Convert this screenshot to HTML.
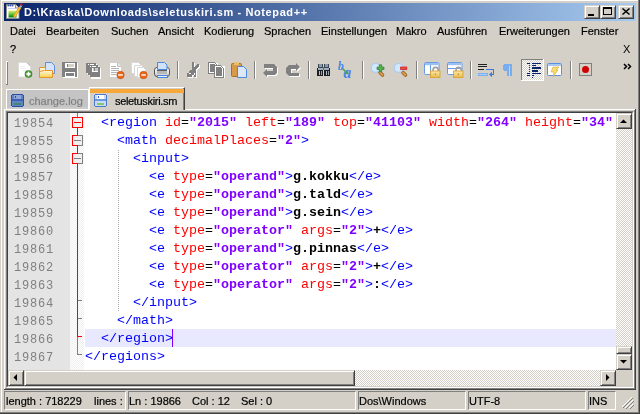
<!DOCTYPE html>
<html><head><meta charset="utf-8">
<style>
*{margin:0;padding:0;box-sizing:border-box}
html,body{width:640px;height:414px;overflow:hidden;background:#D4D0C8}
body{position:relative;font-family:"Liberation Sans",sans-serif;font-size:11px;color:#000;will-change:transform}
.a{position:absolute}
.t{position:absolute;white-space:nowrap;line-height:1;-webkit-text-stroke:0.2px currentColor}
.mono{font-family:"Liberation Mono",monospace;font-size:13.33px;line-height:18px;white-space:pre;margin-top:1px}
.ln{font-family:"Liberation Mono",monospace;font-size:12px;letter-spacing:0.8px;line-height:18px;white-space:pre;margin-top:1.5px;color:#808080}
.chk{background:repeating-conic-gradient(#FFFFFF 0 25%,#D4D0C8 0 50%) 0 0/2px 2px}
.btn{position:absolute;background:#D4D0C8;border-top:1px solid #D4D0C8;border-left:1px solid #D4D0C8;border-right:1px solid #404040;border-bottom:1px solid #404040;box-shadow:inset 1px 1px 0 #FFF,inset -1px -1px 0 #808080}
.tg{color:#0000FF}.at{color:#FF0000}.vl{color:#8000FF;font-weight:bold}.tx{font-weight:bold}
</style></head><body>
<!-- window frame -->
<div class="a" style="left:1px;top:0;width:1px;height:413px;background:#FFF"></div>
<div class="a" style="left:1px;top:0;width:637px;height:1px;background:#FFF"></div>
<div class="a" style="left:638px;top:0;width:1px;height:414px;background:#808080"></div>
<div class="a" style="left:639px;top:0;width:1px;height:414px;background:#404040"></div>
<div class="a" style="left:0;top:412px;width:639px;height:1px;background:#808080"></div>
<div class="a" style="left:0;top:413px;width:640px;height:1px;background:#404040"></div>

<!-- title bar -->
<div class="a" style="left:4px;top:3px;width:632px;height:18px;background:linear-gradient(to right,#0A246A,#A6CAF0)"></div>
<svg class="a" style="left:4px;top:2px" width="20" height="20" viewBox="0 0 20 20">
<defs><linearGradient id="gg" x1="0" y1="0" x2="0" y2="1"><stop offset="0" stop-color="#E8F080"/><stop offset="0.55" stop-color="#58C030"/><stop offset="1" stop-color="#087010"/></linearGradient>
<linearGradient id="pc" x1="0" y1="0" x2="1" y2="0"><stop offset="0" stop-color="#F8D040"/><stop offset="1" stop-color="#E09010"/></linearGradient></defs>
<path d="M2.5 2.5h9l3.5 3.5v10.5h-12.5z" fill="#FFFFFF" stroke="#8C8C8C"/>
<path d="M11.5 2.5v3.5h3.5" fill="#F0F0F0" stroke="#8C8C8C"/>
<rect x="4.5" y="8.5" width="8" height="7" fill="url(#gg)"/>
<rect x="4" y="6" width="8" height="0.8" fill="#B8C8E8"/>
<circle cx="4.3" cy="3.6" r="1" fill="#3858B0"/><circle cx="6.4" cy="3.6" r="1" fill="#3858B0"/><circle cx="8.5" cy="3.6" r="1" fill="#3858B0"/>
<path d="M10.2 14.8 L16.2 5.2" stroke="#E8A018" stroke-width="2.6"/>
<path d="M10.2 14.8 L16.2 5.2" stroke="#F8D848" stroke-width="1"/>
<path d="M16.2 5.2 L17.4 3.4" stroke="#A0B8D0" stroke-width="2"/>
<circle cx="17.3" cy="2.6" r="1.2" fill="#D01818"/>
</svg>
<div class="t" style="left:24px;top:7px;font-size:11px;font-weight:bold;color:#fff;letter-spacing:0.6px;-webkit-text-stroke:0">D:\Kraska\Downloads\seletuskiri.sm - Notepad++</div>
<div class="btn" style="left:584px;top:5px;width:16px;height:14px"></div>
<div class="a" style="left:588px;top:14px;width:6px;height:2px;background:#000"></div>
<div class="btn" style="left:600px;top:5px;width:16px;height:14px"></div>
<div class="a" style="left:603px;top:7px;width:9px;height:8px;border:1px solid #000;border-top-width:2px"></div>
<div class="btn" style="left:618px;top:5px;width:16px;height:14px"></div>
<svg class="a" style="left:618px;top:5px" width="16" height="14" viewBox="0 0 16 14"><path d="M4.5 3.5 L11.5 9.5 M11.5 3.5 L4.5 9.5" stroke="#000" stroke-width="1.6"/></svg>

<!-- menu -->
<div class="t" style="left:10px;top:26px">Datei</div>
<div class="t" style="left:46px;top:26px">Bearbeiten</div>
<div class="t" style="left:111px;top:26px">Suchen</div>
<div class="t" style="left:158px;top:26px">Ansicht</div>
<div class="t" style="left:204px;top:26px">Kodierung</div>
<div class="t" style="left:264px;top:26px">Sprachen</div>
<div class="t" style="left:321px;top:26px">Einstellungen</div>
<div class="t" style="left:396px;top:26px">Makro</div>
<div class="t" style="left:437px;top:26px">Ausführen</div>
<div class="t" style="left:499px;top:26px">Erweiterungen</div>
<div class="t" style="left:581px;top:26px">Fenster</div>
<div class="t" style="left:10px;top:44px">?</div>
<div class="t" style="left:623px;top:44px;font-size:11px;-webkit-text-stroke:0">X</div>

<!-- toolbar -->
<svg class="a" style="left:0;top:56px" width="640" height="30" viewBox="0 56 640 30">
<defs>
<pattern id="ck" width="2" height="2" patternUnits="userSpaceOnUse"><rect width="2" height="2" fill="#D4D0C8"/><rect width="1" height="1" fill="#fff"/><rect x="1" y="1" width="1" height="1" fill="#fff"/></pattern>
<linearGradient id="fold" x1="0" y1="0" x2="0" y2="1"><stop offset="0" stop-color="#FFF8E0"/><stop offset="1" stop-color="#F6D048"/></linearGradient>
<linearGradient id="lock" x1="0" y1="0" x2="0" y2="1"><stop offset="0" stop-color="#FCEAA8"/><stop offset="1" stop-color="#E8B848"/></linearGradient>
</defs>
<g shape-rendering="crispEdges">
<!-- gripper -->
<rect x="6" y="61" width="2" height="24" fill="#FFFFFF"/>
<rect x="7" y="62" width="1" height="23" fill="#808080"/><rect x="6" y="84" width="2" height="1" fill="#808080"/>
<!-- separators -->
<rect x="177" y="61" width="1" height="18" fill="#808080"/><rect x="178" y="61" width="1" height="18" fill="#FFFFFF"/>
<rect x="254" y="61" width="1" height="18" fill="#808080"/><rect x="255" y="61" width="1" height="18" fill="#FFFFFF"/>
<rect x="308" y="61" width="1" height="18" fill="#808080"/><rect x="309" y="61" width="1" height="18" fill="#FFFFFF"/>
<rect x="362" y="61" width="1" height="18" fill="#808080"/><rect x="363" y="61" width="1" height="18" fill="#FFFFFF"/>
<rect x="416" y="61" width="1" height="18" fill="#808080"/><rect x="417" y="61" width="1" height="18" fill="#FFFFFF"/>
<rect x="470" y="61" width="1" height="18" fill="#808080"/><rect x="471" y="61" width="1" height="18" fill="#FFFFFF"/>
<rect x="570" y="61" width="1" height="18" fill="#808080"/><rect x="571" y="61" width="1" height="18" fill="#FFFFFF"/>
</g>
<!-- new -->
<radialGradient id="gr" cx="0.5" cy="0.5" r="0.5"><stop offset="0" stop-color="#B8E8A0"/><stop offset="0.6" stop-color="#58A840"/><stop offset="1" stop-color="#2C7820"/></radialGradient>
<path d="M18.5 62.5h8.5l3.5 3.5v11h-12z" fill="#FFFFFF" stroke="#DCDCDC"/>
<path d="M27 62.5l3.5 3.5" stroke="#B0B0B0"/>
<path d="M20 66.5h5M20 68.5h6M23 70.5h4" stroke="#F0F0F0"/>
<circle cx="28.5" cy="74" r="3.8" fill="url(#gr)"/>
<path d="M28.5 71.8v4.4M26.3 74h4.4" stroke="#fff" stroke-width="1.3"/>
<!-- open -->
<path d="M45.5 62.5h6l3 3v8h-9z" fill="#D4E4FA" stroke="#5C8FE0"/>
<path d="M39.5 77.5V67.5H45.5V72" fill="#FFF4D0" stroke="#E8942C"/>
<rect x="40" y="68" width="5" height="9" fill="#FFF4D0"/>
<path d="M39.5 71.5L44.5 70.5H52.5V77.5H39.5Z" fill="url(#fold)" stroke="#E8942C"/>
<!-- save (disabled) -->
<g shape-rendering="crispEdges">
<rect x="63" y="63" width="15" height="15" fill="#FFFFFF"/>
<rect x="62" y="62" width="15" height="15" fill="#808080"/>
<rect x="65" y="63" width="10" height="5" fill="#FFFFFF"/><rect x="67" y="64" width="7" height="3" fill="#D4D0C8"/><rect x="67" y="64" width="1" height="3" fill="#808080"/>
<rect x="65" y="72" width="10" height="5" fill="#FFFFFF"/><rect x="66" y="73" width="8" height="3" fill="#808080"/>
<!-- save all -->
<path d="M87 64h9l1 1v9h-10z" fill="#FFFFFF"/><path d="M89 66h9l1 1v9h-10z" fill="#FFFFFF"/><path d="M91 68h9l1 1v10h-10z" fill="#FFFFFF"/>
<path d="M86 63h9l1 1v9h-10z" fill="#808080"/><path d="M88 65h9l1 1v9h-10z" fill="#808080"/><path d="M90 67h9l1 1v9h-10z" fill="#808080"/>
<rect x="88" y="64" width="1" height="1" fill="#fff"/><rect x="90" y="64" width="4" height="1" fill="#fff"/>
<rect x="90" y="66" width="1" height="1" fill="#fff"/><rect x="92" y="66" width="4" height="1" fill="#fff"/>
<rect x="92" y="68" width="1" height="4" fill="#fff"/><rect x="92" y="71" width="6" height="1" fill="#fff"/><rect x="93" y="68" width="5" height="3" fill="#C8C8C8"/><rect x="94" y="68" width="1" height="3" fill="#808080"/>
</g>
<!-- close -->
<path d="M109.5 62.5h8l4 4v11h-12z" fill="#FFFFFF" stroke="#D0D0D0"/><path d="M117.5 62.5v4h4" fill="#E8E8E8" stroke="#C0C0C0"/>
<path d="M111 66.5h5M111 68.5h8M111 70.5h8M111 72.5h6M111 74.5h5" stroke="#B4B4B4" stroke-width="1"/>
<circle cx="120.5" cy="75" r="3.7" fill="#E86818" stroke="#C04808" stroke-width="0.6"/>
<rect x="118.2" y="74.3" width="4.6" height="1.4" fill="#fff"/>
<!-- close all -->
<path d="M131.5 62.5h7l2 2v9h-9z" fill="#FFFFFF" stroke="#D8D8D8"/>
<path d="M134.5 65.5h7l2 2v9h-9z" fill="#FFFFFF" stroke="#D8D8D8"/>
<path d="M137.5 67.5h6l2 2v8h-8z" fill="#FFFFFF" stroke="#D8D8D8"/>
<circle cx="143.5" cy="75" r="3.7" fill="#E86818" stroke="#C04808" stroke-width="0.6"/>
<rect x="141.2" y="74.3" width="4.6" height="1.4" fill="#fff"/>
<!-- print -->
<linearGradient id="prg" x1="0" y1="0" x2="0" y2="1"><stop offset="0" stop-color="#FFFFFF"/><stop offset="1" stop-color="#C8C8C8"/></linearGradient>
<rect x="154.5" y="67.5" width="15" height="9" rx="2.5" fill="url(#prg)" stroke="#585858"/>
<rect x="157" y="71" width="10" height="3" fill="#B8B8B8"/>
<rect x="157" y="70" width="10" height="1" fill="#606060"/>
<path d="M157.5 62.5h7l2.5 2.5v4.5h-9.5z" fill="#CFE2FA" stroke="#4A88E0"/>
<rect x="157.5" y="75.5" width="10" height="2" fill="#E8F0FC" stroke="#4A88E0"/>
<!-- cut (disabled) -->
<g shape-rendering="crispEdges">
<g transform="translate(1,1)" fill="#FFFFFF">
<rect x="192" y="62" width="2" height="9"/>
<path d="M197 64h2v2l-4 5h-2v-2z"/>
<path d="M190 70h6v7h-2v-2h-2v2h-5v-4h2z"/>
</g>
<g fill="#808080">
<rect x="192" y="62" width="2" height="9"/>
<path d="M197 64h2v2l-4 5h-2v-2z"/>
<path d="M190 70h6v7h-2v-2h-2v2h-5v-4h2z"/>
</g>
<rect x="189" y="73" width="2" height="1" fill="#FFFFFF"/><rect x="194" y="73" width="1" height="2" fill="#FFFFFF"/>
<!-- copy (disabled) -->
<rect x="209" y="63" width="9" height="11" fill="#FFFFFF"/>
<path d="M208.5 62.5h6l2 2v9h-8z" fill="#FFFFFF" stroke="#808080"/>
<rect x="210" y="64" width="5" height="8" fill="#808080"/>
<rect x="215" y="66" width="10" height="12" fill="#FFFFFF"/>
<path d="M214.5 65.5h6l3 3v8.5h-9z" fill="#FFFFFF" stroke="#808080"/>
<path d="M216 67h4l2 2v7h-6z" fill="#808080"/>
</g>
<!-- paste -->
<rect x="231.5" y="63.5" width="10" height="13" rx="1" fill="#D89A48" stroke="#A8702C"/>
<rect x="234" y="62" width="5" height="3" fill="#E8C070"/>
<path d="M237.5 66.5h6l3 3v8h-9z" fill="#DCE8FA" stroke="#4C88DC"/>
<!-- undo (disabled) -->
<path d="M264 64H274L277 67V73L275 75H267V77L263 73L267 69V71H273V68H264Z" fill="#FFFFFF" transform="translate(1,1)"/>
<path d="M264 64H274L277 67V73L275 75H267V77L263 73L267 69V71H273V68H264Z" fill="#808080"/>
<!-- redo -->
<path d="M289 65H296V63L300 67L296 71V69H291V73H299V76H289L286 73V68Z" fill="#FFFFFF" transform="translate(1,1)"/>
<path d="M289 65H296V63L300 67L296 71V69H291V73H299V76H289L286 73V68Z" fill="#808080"/>
<!-- find -->
<g shape-rendering="crispEdges">
<rect x="318" y="64" width="5" height="4" fill="#404850"/><rect x="324" y="64" width="5" height="4" fill="#404850"/>
<rect x="319" y="64" width="3" height="3" fill="#8898B0"/><rect x="325" y="64" width="3" height="3" fill="#8898B0"/>
<rect x="317" y="68" width="6" height="8" fill="#1C2024"/><rect x="324" y="68" width="6" height="8" fill="#1C2024"/>
<rect x="318" y="68" width="11" height="2" fill="#A0B0C0"/>
<rect x="323" y="67" width="1" height="3" fill="#606870"/>
<rect x="319" y="71" width="1" height="4" fill="#B8C0C8"/><rect x="321" y="71" width="1" height="4" fill="#98A0A8"/>
<rect x="326" y="71" width="1" height="4" fill="#B8C0C8"/><rect x="328" y="71" width="1" height="4" fill="#98A0A8"/>
</g>
<!-- replace -->
<path d="M341.5 67.5l4.5 4.5" stroke="#40A848" stroke-width="1.6"/><path d="M348.5 74.5l-5-1 4-4z" fill="#40A848"/>
<text x="338" y="70" font-family="Liberation Serif" font-style="italic" font-weight="bold" font-size="12" fill="#4A88E8">b</text>
<text x="343.5" y="78" font-family="Liberation Serif" font-style="italic" font-weight="bold" font-size="16" fill="#4A88E8">a</text>
<!-- zoom in -->
<path d="M380 72.5l2.5 2.5" stroke="#9A6020" stroke-width="3.6" stroke-linecap="round"/>
<path d="M380 72.5l2.5 2.5" stroke="#D89850" stroke-width="2" stroke-linecap="round"/>
<circle cx="375.6" cy="67.9" r="4.4" fill="#D4E8FC" stroke="#A8CCF0" stroke-width="1.2"/>
<path d="M379.3 64.8h2.4v2.3h2.3v2.4h-2.3v2.3h-2.4v-2.3h-2.3v-2.4h2.3z" fill="#58B050" stroke="#2E8030" stroke-width="0.7"/>
<!-- zoom out -->
<path d="M403 72.5l2.5 2.5" stroke="#9A6020" stroke-width="3.6" stroke-linecap="round"/>
<path d="M403 72.5l2.5 2.5" stroke="#D89850" stroke-width="2" stroke-linecap="round"/>
<circle cx="398.6" cy="67.9" r="4.4" fill="#D4E8FC" stroke="#A8CCF0" stroke-width="1.2"/>
<rect x="400.6" y="67" width="6.2" height="2.6" fill="#F04848" stroke="#C82020" stroke-width="0.7"/>
<!-- sync v -->
<rect x="424.5" y="62.5" width="14.5" height="12" rx="1.2" fill="#fff" stroke="#6A9AE6"/>
<rect x="425" y="63" width="13.5" height="2.2" fill="#9CC0F0"/>
<rect x="430" y="65" width="1" height="9" fill="#6A9AE6"/>
<path d="M433 72v-2a2.6 2.6 0 0 1 5.2 0v2" fill="none" stroke="#A0A0A0" stroke-width="1.6"/>
<rect x="430.5" y="71" width="9.5" height="6.5" fill="url(#lock)" stroke="#D8A438" stroke-width="0.9"/>
<rect x="434.8" y="73.5" width="1.2" height="1.5" fill="#C89030"/>
<!-- sync h -->
<rect x="447.5" y="62.5" width="14.5" height="12" rx="1.2" fill="#fff" stroke="#6A9AE6"/>
<rect x="448" y="63" width="13.5" height="2.2" fill="#9CC0F0"/>
<rect x="448" y="68" width="13.5" height="1" fill="#6A9AE6"/>
<path d="M456 72v-2a2.6 2.6 0 0 1 5.2 0v2" fill="none" stroke="#A0A0A0" stroke-width="1.6"/>
<rect x="453.5" y="71" width="9.5" height="6.5" fill="url(#lock)" stroke="#D8A438" stroke-width="0.9"/>
<rect x="457.8" y="73.5" width="1.2" height="1.5" fill="#C89030"/>
<!-- wrap -->
<g shape-rendering="crispEdges">
<rect x="478" y="64" width="9" height="1" fill="#202020"/>
<rect x="478" y="66" width="9" height="1" fill="#202020"/>
<rect x="478" y="69" width="6" height="1" fill="#202020"/>
<rect x="478" y="73" width="10" height="3" fill="#7CB0EE"/>
<rect x="479" y="74" width="8" height="1" fill="#A8CCF6"/>
<rect x="486" y="69" width="8" height="1" fill="#3C7CD8"/>
<rect x="493" y="69" width="1" height="6" fill="#3C7CD8"/>
<rect x="491" y="74" width="3" height="1" fill="#3C7CD8"/>
</g>
<path d="M489 74.5L492 71.8V77.2Z" fill="#3C7CD8"/>
<!-- pilcrow -->
<g shape-rendering="crispEdges" fill="#78AEF0">
<path d="M506 64h6v12h-2v-10h-1v10h-2v-5h-1a2.5 3 0 0 1 0-7z"/>
</g>
<!-- indent guide (checked) -->
<g shape-rendering="crispEdges">
<rect x="521" y="59" width="23" height="22" fill="url(#ck)"/>
<rect x="521" y="59" width="23" height="1" fill="#808080"/>
<rect x="521" y="59" width="1" height="22" fill="#808080"/>
<rect x="521" y="80" width="23" height="1" fill="#FFFFFF"/>
<rect x="543" y="59" width="1" height="22" fill="#FFFFFF"/>
<g fill="#0A246A">
<rect x="527" y="63" width="3" height="1"/><rect x="532" y="63" width="9" height="1"/>
<rect x="532" y="65" width="4" height="1"/>
<rect x="532" y="67" width="9" height="2"/>
<rect x="532" y="70" width="6" height="2"/>
<rect x="527" y="73" width="3" height="1"/><rect x="532" y="73" width="9" height="1"/>
<rect x="527" y="75" width="3" height="1"/><rect x="532" y="75" width="2" height="1"/>
<rect x="532" y="77" width="1" height="1"/>
</g>
<g fill="#E00000"><rect x="529" y="65" width="1" height="1"/><rect x="529" y="67" width="1" height="1"/><rect x="529" y="69" width="1" height="1"/><rect x="529" y="71" width="1" height="1"/></g>
</g>
<!-- UDL -->
<rect x="547.5" y="63.5" width="14" height="12" rx="1" fill="#fff" stroke="#5C8FE0"/>
<rect x="548" y="64" width="13" height="2" fill="#A8C8F0"/>
<path d="M553 67h6l-3 3h2l-5 7 1-5h-3z" fill="#F8DC70" stroke="#E0B040" stroke-width="0.7"/>
<!-- record -->
<g shape-rendering="crispEdges">
<rect x="579.5" y="63.5" width="12" height="12" fill="none" stroke="#808080"/>
</g>
<circle cx="585.5" cy="69.5" r="3.5" fill="#D00000"/>
<!-- chevron -->
<path d="M624 64l2.5 2.5-2.5 2.5M628 64l2.5 2.5-2.5 2.5" fill="none" stroke="#000" stroke-width="1.5"/>
</svg>

<!-- tabs -->
<div class="a" style="left:6px;top:89px;width:83px;height:20px;background:#C4C4C4;border:1px solid #FFFFFF;border-bottom:none;border-top-left-radius:1px"></div>
<div class="a" style="left:7px;top:107px;width:81px;height:2px;background:#CCCCCC"></div>
<svg class="a" style="left:11px;top:94px" width="14" height="14" shape-rendering="crispEdges">
<rect x="0" y="1" width="13" height="11" fill="#2A50A4"/><rect x="1" y="0" width="11" height="13" fill="#2A50A4"/>
<rect x="1" y="1" width="11" height="11" fill="#6482C6"/>
<rect x="3" y="1" width="7" height="4" fill="#90A6D8"/><rect x="4" y="2" width="1" height="2" fill="#2A50A4"/>
<rect x="1" y="5" width="11" height="2" fill="#3A60B0"/>
<rect x="3" y="9" width="7" height="2" fill="#3E8A68"/>
</svg>
<div class="t" style="left:29px;top:96px;color:#808080;font-size:11px">change.log</div>
<div class="a" style="left:89px;top:87px;width:96px;height:23px;background:#D4D0C8;border-top:1px solid #FFFFFF;border-left:1px solid #FFFFFF;border-right:1px solid #404040;box-shadow:inset -1px 0 0 #808080"></div>
<div class="a" style="left:90px;top:89px;width:94px;height:4px;background:#F8A838"></div>
<svg class="a" style="left:94px;top:94px" width="14" height="14" shape-rendering="crispEdges">
<rect x="0" y="1" width="13" height="11" fill="#4A78CC"/><rect x="1" y="0" width="11" height="13" fill="#4A78CC"/>
<rect x="1" y="1" width="11" height="11" fill="#C8DAF4"/>
<rect x="3" y="1" width="7" height="4" fill="#FFFFFF"/><rect x="4" y="2" width="1" height="2" fill="#3A68C0"/>
<rect x="1" y="5" width="11" height="2" fill="#6C98DC"/>
<rect x="3" y="9" width="7" height="2" fill="#88C868"/>
</svg>
<div class="t" style="left:115px;top:96px;font-size:11px;letter-spacing:-0.33px">seletuskiri.sm</div>


<!-- tab pane border -->
<div class="a" style="left:4px;top:109px;width:86px;height:1px;background:#FFF"></div><div class="a" style="left:185px;top:109px;width:451px;height:1px;background:#FFF"></div>
<div class="a" style="left:4px;top:109px;width:1px;height:280px;background:#FFF"></div>
<div class="a" style="left:634px;top:110px;width:1px;height:279px;background:#808080"></div>
<div class="a" style="left:635px;top:109px;width:1px;height:281px;background:#404040"></div>
<div class="a" style="left:5px;top:388px;width:630px;height:1px;background:#808080"></div>
<div class="a" style="left:4px;top:389px;width:632px;height:1px;background:#404040"></div>
<!-- editor sunken border -->
<div class="a" style="left:6px;top:111px;width:628px;height:277px;border-top:1px solid #808080;border-left:1px solid #808080;border-right:1px solid #FFF;border-bottom:1px solid #FFF"></div>
<div class="a" style="left:7px;top:112px;width:626px;height:275px;border-top:1px solid #404040;border-left:1px solid #404040;border-right:1px solid #D4D0C8;border-bottom:1px solid #D4D0C8"></div>

<!-- editor content -->
<div class="a" style="left:8px;top:113px;width:608px;height:257px;background:#fff;overflow:hidden">
  <div class="a" style="left:0;top:0;width:62px;height:257px;background:#E4E4E4"></div>
  <div class="a" style="left:62px;top:0;width:14px;height:257px;background:repeating-conic-gradient(#FFFFFF 0 25%,#EFEFEF 0 50%) 0 0/2px 2px"></div>
  <div class="a" style="left:77px;top:216px;width:531px;height:18px;background:#E8E8FF"></div>
  <div class="a mono" style="left:77px;top:0px">  <span class="tg">&lt;region</span> <span class="at">id</span>=<span class="vl">"2015"</span> <span class="at">left</span>=<span class="vl">"189"</span> <span class="at">top</span>=<span class="vl">"41103"</span> <span class="at">width</span>=<span class="vl">"264"</span> <span class="at">height</span>=<span class="vl">"34"</span></div>
<div class="a ln" style="left:0;top:0px;width:46px;text-align:right">19854</div>
<div class="a mono" style="left:77px;top:18px">    <span class="tg">&lt;math</span> <span class="at">decimalPlaces</span>=<span class="vl">"2"</span><span class="tg">&gt;</span></div>
<div class="a ln" style="left:0;top:18px;width:46px;text-align:right">19855</div>
<div class="a mono" style="left:77px;top:36px">      <span class="tg">&lt;input&gt;</span></div>
<div class="a ln" style="left:0;top:36px;width:46px;text-align:right">19856</div>
<div class="a mono" style="left:77px;top:54px">        <span class="tg">&lt;e</span> <span class="at">type</span>=<span class="vl">"operand"</span><span class="tg">&gt;</span><span class="tx">g.kokku</span><span class="tg">&lt;/e&gt;</span></div>
<div class="a ln" style="left:0;top:54px;width:46px;text-align:right">19857</div>
<div class="a mono" style="left:77px;top:72px">        <span class="tg">&lt;e</span> <span class="at">type</span>=<span class="vl">"operand"</span><span class="tg">&gt;</span><span class="tx">g.tald</span><span class="tg">&lt;/e&gt;</span></div>
<div class="a ln" style="left:0;top:72px;width:46px;text-align:right">19858</div>
<div class="a mono" style="left:77px;top:90px">        <span class="tg">&lt;e</span> <span class="at">type</span>=<span class="vl">"operand"</span><span class="tg">&gt;</span><span class="tx">g.sein</span><span class="tg">&lt;/e&gt;</span></div>
<div class="a ln" style="left:0;top:90px;width:46px;text-align:right">19859</div>
<div class="a mono" style="left:77px;top:108px">        <span class="tg">&lt;e</span> <span class="at">type</span>=<span class="vl">"operator"</span> <span class="at">args</span>=<span class="vl">"2"</span><span class="tg">&gt;</span><span class="tx">+</span><span class="tg">&lt;/e&gt;</span></div>
<div class="a ln" style="left:0;top:108px;width:46px;text-align:right">19860</div>
<div class="a mono" style="left:77px;top:126px">        <span class="tg">&lt;e</span> <span class="at">type</span>=<span class="vl">"operand"</span><span class="tg">&gt;</span><span class="tx">g.pinnas</span><span class="tg">&lt;/e&gt;</span></div>
<div class="a ln" style="left:0;top:126px;width:46px;text-align:right">19861</div>
<div class="a mono" style="left:77px;top:144px">        <span class="tg">&lt;e</span> <span class="at">type</span>=<span class="vl">"operator"</span> <span class="at">args</span>=<span class="vl">"2"</span><span class="tg">&gt;</span><span class="tx">+</span><span class="tg">&lt;/e&gt;</span></div>
<div class="a ln" style="left:0;top:144px;width:46px;text-align:right">19862</div>
<div class="a mono" style="left:77px;top:162px">        <span class="tg">&lt;e</span> <span class="at">type</span>=<span class="vl">"operator"</span> <span class="at">args</span>=<span class="vl">"2"</span><span class="tg">&gt;</span><span class="tx">:</span><span class="tg">&lt;/e&gt;</span></div>
<div class="a ln" style="left:0;top:162px;width:46px;text-align:right">19863</div>
<div class="a mono" style="left:77px;top:180px">      <span class="tg">&lt;/input&gt;</span></div>
<div class="a ln" style="left:0;top:180px;width:46px;text-align:right">19864</div>
<div class="a mono" style="left:77px;top:198px">    <span class="tg">&lt;/math&gt;</span></div>
<div class="a ln" style="left:0;top:198px;width:46px;text-align:right">19865</div>
<div class="a mono" style="left:77px;top:216px">  <span class="tg">&lt;/region&gt;</span></div>
<div class="a ln" style="left:0;top:216px;width:46px;text-align:right">19866</div>
<div class="a mono" style="left:77px;top:234px"><span class="tg">&lt;/regions&gt;</span></div>
<div class="a ln" style="left:0;top:234px;width:46px;text-align:right">19867</div>
</div>

<svg class="a" style="left:70px;top:113px" width="14" height="257" shape-rendering="crispEdges">
<rect x="7" y="0" width="1" height="4" fill="#808080"/>
<rect x="2" y="4" width="11" height="11" fill="#F0F0F0"/>
<path d="M2.5 4.5h10v10h-10z" fill="none" stroke="#FF0000"/>
<rect x="4" y="9" width="7" height="1" fill="#FF0000"/>
<rect x="7" y="15" width="1" height="7" fill="#FF0000"/>
<rect x="2" y="22" width="11" height="11" fill="#F0F0F0"/>
<path d="M7.5 22.5h5v10h-5" fill="none" stroke="#808080"/>
<path d="M7.5 22.5h-5v10h5" fill="none" stroke="#FF0000"/>
<rect x="4" y="27" width="7" height="1" fill="#808080"/>
<rect x="7" y="33" width="1" height="7" fill="#FF0000"/>
<rect x="2" y="40" width="11" height="11" fill="#F0F0F0"/>
<path d="M7.5 40.5h5v10h-5" fill="none" stroke="#808080"/>
<path d="M7.5 40.5h-5v10h5" fill="none" stroke="#FF0000"/>
<rect x="4" y="45" width="7" height="1" fill="#808080"/>
<rect x="7" y="51" width="1" height="173" fill="#FF0000"/>
<rect x="8" y="187" width="4" height="1" fill="#808080"/>
<rect x="8" y="205" width="4" height="1" fill="#808080"/>
<rect x="8" y="223" width="4" height="1" fill="#FF0000"/>
<rect x="7" y="224" width="1" height="18" fill="#808080"/>
<rect x="8" y="241" width="4" height="1" fill="#808080"/>
</svg>
<div class="a" style="left:118px;top:150px;width:1px;height:161px;background:repeating-linear-gradient(#A8A8A8 0 1px,transparent 1px 2px)"></div>
<div class="a" style="left:172px;top:329px;width:1px;height:18px;background:#8000FF"></div>
<!-- scrollbars -->
<div class="a chk" style="left:616px;top:113px;width:16px;height:257px"></div>
<div class="btn" style="left:616px;top:113px;width:16px;height:16px"></div>
<div class="btn" style="left:616px;top:346px;width:16px;height:8px"></div>
<div class="btn" style="left:616px;top:354px;width:16px;height:16px"></div>
<div class="a chk" style="left:8px;top:370px;width:608px;height:16px"></div>
<div class="btn" style="left:8px;top:370px;width:16px;height:16px"></div>
<div class="btn" style="left:24px;top:370px;width:331px;height:16px"></div>
<div class="btn" style="left:600px;top:370px;width:16px;height:16px"></div>
<svg class="a" style="left:616px;top:113px" width="16" height="16"><path d="M4 10h7L7.5 6.5z" fill="#000"/></svg>
<svg class="a" style="left:616px;top:354px" width="16" height="16"><path d="M4 6h7L7.5 9.5z" fill="#000"/></svg>
<svg class="a" style="left:8px;top:370px" width="16" height="16"><path d="M9 4v7L5.5 7.5z" fill="#000"/></svg>
<svg class="a" style="left:600px;top:370px" width="16" height="16"><path d="M6 4v7L9.5 7.5z" fill="#000"/></svg>

<!-- status bar -->
<div class="a" style="left:4px;top:391px;width:122px;height:19px;border-top:1px solid #808080;border-left:1px solid #808080;border-right:1px solid #FFFFFF;border-bottom:1px solid #FFFFFF"></div>
<div class="a" style="left:128px;top:391px;width:228px;height:19px;border-top:1px solid #808080;border-left:1px solid #808080;border-right:1px solid #FFFFFF;border-bottom:1px solid #FFFFFF"></div>
<div class="a" style="left:358px;top:391px;width:108px;height:19px;border-top:1px solid #808080;border-left:1px solid #808080;border-right:1px solid #FFFFFF;border-bottom:1px solid #FFFFFF"></div>
<div class="a" style="left:468px;top:391px;width:118px;height:19px;border-top:1px solid #808080;border-left:1px solid #808080;border-right:1px solid #FFFFFF;border-bottom:1px solid #FFFFFF"></div>
<div class="a" style="left:588px;top:391px;width:28px;height:19px;border-top:1px solid #808080;border-left:1px solid #808080;border-right:1px solid #FFFFFF;border-bottom:1px solid #FFFFFF"></div>
<div class="t" style="left:6px;top:396px">length : 718229</div>
<div class="t" style="left:94px;top:396px">lines :</div>
<div class="t" style="left:129px;top:396px">Ln : 19866</div>
<div class="t" style="left:192px;top:396px">Col : 12</div>
<div class="t" style="left:241px;top:396px">Sel : 0</div>
<div class="t" style="left:359px;top:396px">Dos\Windows</div>
<div class="t" style="left:469px;top:396px">UTF-8</div>
<div class="t" style="left:589px;top:396px">INS</div>
<svg class="a" style="left:620px;top:396px" width="16" height="14" shape-rendering="crispEdges">
<path d="M13 2L3 12M14 5L6 13M14 9L10 13" stroke="#FFFFFF" stroke-width="1" transform="translate(-1,-1)"/>
<path d="M13 2L3 12M14 5L6 13M14 9L10 13" stroke="#808080" stroke-width="1.4"/>
</svg>

</body></html>
